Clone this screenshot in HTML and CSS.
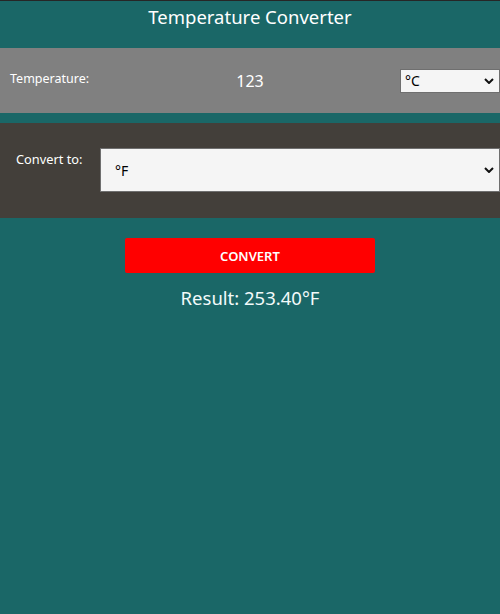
FILE: index.html
```html
<!DOCTYPE html>
<html lang="en">
<head>
<meta charset="utf-8">
<title>Temperature Converter</title>
<link rel="stylesheet" href="styles.css">
</head>
<body>
<div class="app">
  <h1 class="title">Temperature Converter</h1>
  <div class="row row-input">
    <label class="label label-temp" for="temp">Temperature:</label>
    <div class="value" id="temp">123</div>
    <select class="select select-small">
      <option>°C</option>
      <option>°F</option>
      <option>K</option>
    </select>
  </div>
  <div class="row row-convert">
    <label class="label label-conv">Convert to:</label>
    <select class="select select-big">
      <option>°F</option>
      <option>°C</option>
      <option>K</option>
    </select>
  </div>
  <div class="actions">
    <button class="btn" type="button">CONVERT</button>
    <div class="result">Result: 253.40°F</div>
  </div>
</div>
</body>
</html>
```
FILE: styles.css
```css
html, body {
  margin: 0;
  padding: 0;
}
body {
  background: #1a6767;
  border-top: 1px solid #262626;
  height: 613px;
  font-family: "Noto Sans", "Open Sans", sans-serif;
  color: #ffffff;
}
.app {
  display: flex;
  flex-direction: column;
}
.title {
  margin: 0;
  height: 47px;
  padding-top: 2px;
  box-sizing: border-box;
  font-size: 18.5px;
  font-weight: 400;
  text-align: center;
  line-height: 28px;
}
.row {
  display: flex;
}
.row-input {
  background: #808080;
  height: 65px;
  align-items: center;
  padding-left: 10px;
}
.label {
  font-size: 12.5px;
}
.label-temp {
  width: 200px;
  margin-top: -5px;
}
.value {
  width: 80px;
  text-align: center;
  font-size: 16px;
}
.select {
  appearance: none;
  -webkit-appearance: none;
  font-family: "Noto Sans", "Open Sans", sans-serif;
  background-color: #f5f5f5;
  background-image: url("data:image/svg+xml,%3Csvg xmlns='http://www.w3.org/2000/svg' width='10' height='6' viewBox='0 0 10 6'%3E%3Cpath d='M1 1l4 4 4-4' fill='none' stroke='%23111' stroke-width='2'/%3E%3C/svg%3E");
  background-repeat: no-repeat;
  border: 1px solid #6f6f6f;
  border-radius: 0;
  color: #000;
  margin: 0;
}
.select-small {
  margin-left: auto;
  width: 100px;
  height: 24px;
  font-size: 14px;
  padding: 0 0 0 4px;
  background-position: right 5px center;
  box-sizing: border-box;
}
.row-convert {
  margin-top: 10px;
  background: #433f3a;
  height: 95px;
  align-items: flex-start;
  padding-left: 16px;
}
.label-conv {
  width: 84px;
  padding-top: 27px;
  font-size: 12.8px;
}
.select-big {
  margin-top: 25px;
  flex: 1;
  height: 44px;
  font-size: 14px;
  padding: 0 0 0 14px;
  background-position: right 5px center;
  box-sizing: border-box;
}
.actions {
  display: flex;
  flex-direction: column;
  align-items: center;
}
.btn {
  margin-top: 20px;
  width: 250px;
  height: 35px;
  background: #ff0000;
  color: #ffffff;
  border: none;
  border-radius: 2px;
  font-family: "Noto Sans", "Open Sans", sans-serif;
  font-size: 13px;
  font-weight: 600;
}
.result {
  margin-top: 12px;
  font-size: 18.5px;
  color: #f2fafa;
}
```
